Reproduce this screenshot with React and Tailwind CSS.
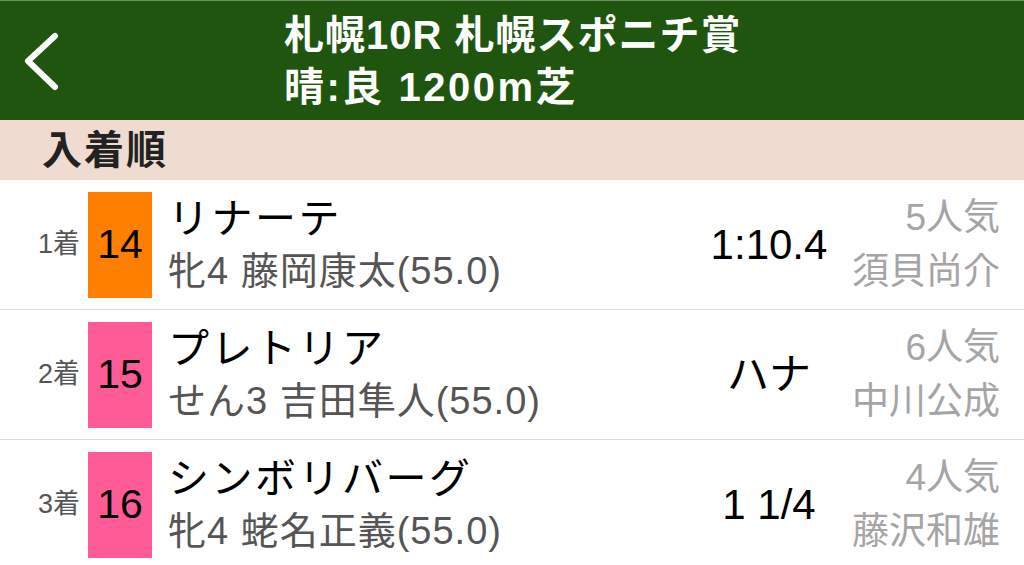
import React from "react";

const rows = [
  { rank: "1", num: "14", color: "bg-[#ff8000]", name: "リナーテ", jockey: "牝4 藤岡康太(55.0)", time: "1:10.4", pop: "5人気", trainer: "須貝尚介" },
  { rank: "2", num: "15", color: "bg-[#ff5c97]", name: "プレトリア", jockey: "せん3 吉田隼人(55.0)", time: "ハナ", pop: "6人気", trainer: "中川公成" },
  { rank: "3", num: "16", color: "bg-[#ff5c97]", name: "シンボリバーグ", jockey: "牝4 蛯名正義(55.0)", time: "1 1/4", pop: "4人気", trainer: "藤沢和雄" },
];

const font = { fontFamily: '"Liberation Sans", "Noto Sans CJK JP", sans-serif' };

export default function App() {
  return (
    <div className="w-[1024px] h-[565px] overflow-hidden bg-white" style={font}>
      <div className="h-[120px] bg-[#205510] border-t border-[#6f8f62] flex items-center">
        <div className="w-[284px] h-full flex items-center pl-[22px]">
          <svg width="40" height="60" viewBox="0 0 40 60">
            <polyline points="33,5 6,30 33,56" fill="none" stroke="white" strokeWidth="6" strokeLinecap="round" strokeLinejoin="round" />
          </svg>
        </div>
        <div className="text-white font-bold text-[40px] leading-[52px] tracking-[1px]">
          <div>札幌10R 札幌スポニチ賞</div>
          <div className="tracking-[2.5px]">晴:良 1200m芝</div>
        </div>
      </div>
      <div className="h-[60px] bg-[#efdbcf] flex items-center pl-[42px]">
        <span className="font-bold text-[40px] text-[#222] tracking-[2px]">入着順</span>
      </div>
      {rows.map((r) => (
        <div key={r.rank} className="h-[130px] border-b border-[#dcdcdc] flex items-center">
          <div className="w-[80px] text-right text-[27px] text-[#555]">{r.rank}着</div>
          <div className={`ml-[8px] w-[64px] h-[106px] ${r.color} flex items-center justify-center text-[41px] text-black`}>{r.num}</div>
          <div className="ml-[16px] flex-1 flex flex-col">
            <div className="text-[41px] leading-[52px] text-black tracking-[2.5px]">{r.name}</div>
            <div className="text-[38px] leading-[52px] text-[#555] tracking-[1px]">{r.jockey}</div>
          </div>
          <div className="w-[150px] text-center text-[42px] text-black">{r.time}</div>
          <div className="w-[156px] pr-[24px] flex flex-col items-end text-[37px] leading-[54px] text-[#a5a5a5] box-content">
            <div>{r.pop}</div>
            <div>{r.trainer}</div>
          </div>
        </div>
      ))}
    </div>
  );
}
